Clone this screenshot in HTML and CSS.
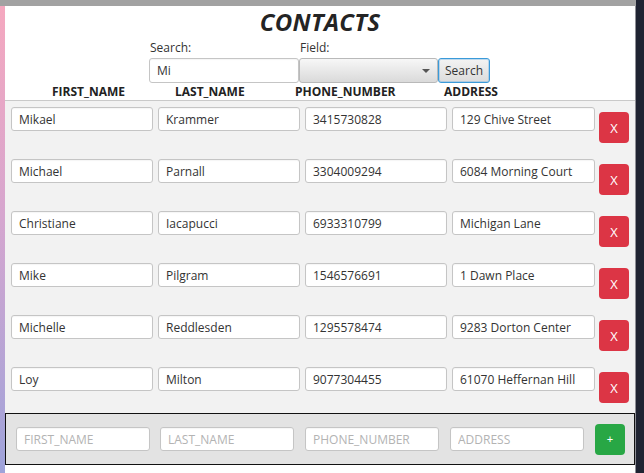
FILE: index.html
```html
<!DOCTYPE html>
<html>
<head>
<meta charset="utf-8">
<link rel="stylesheet" href="styles.css">
</head>
<body>
<div class="screen">
  <div class="frame">
    <div class="topbar"></div>
    <div class="body">
      <div class="accent"></div>
      <div class="main">
        <header class="header">
          <h1 class="title">CONTACTS</h1>
          <div class="search-row">
            <div class="group">
              <label class="label">Search:</label>
              <input class="field search-input" type="text" value="Mi">
            </div>
            <div class="group">
              <label class="label">Field:</label>
              <div class="combo"><span class="arrow"></span></div>
            </div>
            <div class="group">
              <span class="label">&nbsp;</span>
              <button class="search-btn">Search</button>
            </div>
          </div>
          <div class="col-heads">
            <span>FIRST_NAME</span>
            <span>LAST_NAME</span>
            <span>PHONE_NUMBER</span>
            <span>ADDRESS</span>
          </div>
        </header>
        <div class="list">
          <div class="row">
            <input class="field c1" value="Mikael"><input class="field c2" value="Krammer"><input class="field c3" value="3415730828"><input class="field c4" value="129 Chive Street">
            <button class="del">X</button>
          </div>
          <div class="row">
            <input class="field c1" value="Michael"><input class="field c2" value="Parnall"><input class="field c3" value="3304009294"><input class="field c4" value="6084 Morning Court">
            <button class="del">X</button>
          </div>
          <div class="row">
            <input class="field c1" value="Christiane"><input class="field c2" value="Iacapucci"><input class="field c3" value="6933310799"><input class="field c4" value="Michigan Lane">
            <button class="del">X</button>
          </div>
          <div class="row">
            <input class="field c1" value="Mike"><input class="field c2" value="Pilgram"><input class="field c3" value="1546576691"><input class="field c4" value="1 Dawn Place">
            <button class="del">X</button>
          </div>
          <div class="row">
            <input class="field c1" value="Michelle"><input class="field c2" value="Reddlesden"><input class="field c3" value="1295578474"><input class="field c4" value="9283 Dorton Center">
            <button class="del">X</button>
          </div>
          <div class="row">
            <input class="field c1" value="Loy"><input class="field c2" value="Milton"><input class="field c3" value="9077304455"><input class="field c4" value="61070 Heffernan Hill">
            <button class="del">X</button>
          </div>
        </div>
        <div class="add-panel">
          <input class="field add a1" placeholder="FIRST_NAME">
          <input class="field add" placeholder="LAST_NAME">
          <input class="field add" placeholder="PHONE_NUMBER">
          <input class="field add" placeholder="ADDRESS">
          <button class="plus">+</button>
        </div>
      </div>
      <div class="edge"></div>
    </div>
  </div>
  <div class="dark"></div>
</div>
</body>
</html>
```

FILE: styles.css
```css
* { box-sizing: border-box; }
html, body { margin: 0; padding: 0; }
body {
  width: 644px;
  height: 473px;
  overflow: hidden;
  font-family: "Open Sans", "Noto Sans", sans-serif;
  font-size: 12px;
  color: #333;
  background: #fff;
}
.screen { display: flex; height: 473px; }
.frame { width: 636px; display: flex; flex-direction: column; }
.dark { flex: 1; background: #1f2332; }
.topbar { height: 6px; background: #a2a2a2; flex: none; }
.body { display: flex; flex: 1; }
.accent {
  width: 5px;
  background: linear-gradient(to bottom, #f5a8bf 0%, #d6a6cf 45%, #9ea3da 100%);
}
.edge { width: 1px; background: #8f8f96; }
.main { width: 630px; display: flex; flex-direction: column; background: #fff; }

.header { height: 95px; border-bottom: 1px solid #c9c9c9; background: #fff; }
.title {
  margin: 0;
  height: 32px;
  line-height: 32px;
  text-align: center;
  font-size: 24px;
  font-weight: 700;
  font-style: italic;
  color: #242424;
  letter-spacing: 0.3px;
}
.search-row { display: flex; padding-left: 144px; align-items: flex-end; }
.group { display: flex; flex-direction: column; }
.label {
  height: 20px;
  line-height: 16px;
  padding-top: 2px;
  padding-left: 1px;
  font-size: 12px;
  color: #333;
}
.field {
  height: 24px;
  border: 1px solid #c5c5c5;
  border-radius: 3px;
  background: #fff;
  font-family: "Open Sans", "Noto Sans", sans-serif;
  font-size: 12px;
  color: #333;
  padding: 0 7px;
  margin: 0;
  outline: none;
  box-shadow: inset 0 1px 1px rgba(0,0,0,0.04);
}
.search-input { width: 150px; height: 25px; }
.combo {
  width: 139px;
  height: 25px;
  border: 1px solid #b9b9b9;
  border-radius: 3px;
  background: linear-gradient(to bottom, #f7f7f7, #dadada);
  position: relative;
}
.arrow {
  position: absolute;
  right: 7px;
  top: 10px;
  width: 0; height: 0;
  border-left: 4px solid transparent;
  border-right: 4px solid transparent;
  border-top: 4px solid #555;
}
.search-btn {
  width: 52px;
  height: 25px;
  margin: 0;
  padding: 0;
  border: 1px solid #3a9ad9;
  border-radius: 3px;
  background: linear-gradient(to bottom, #f3f3f3, #dcdcdc);
  box-shadow: 0 0 0 1px rgba(90,170,230,0.35) inset;
  font-family: "Open Sans", "Noto Sans", sans-serif;
  font-size: 12px;
  color: #333;
}
.col-heads {
  display: grid;
  grid-template-columns: 123px 120px 149px auto;
  padding-left: 47px;
  height: 17px;
  line-height: 17px;
  font-weight: 700;
  font-size: 12px;
  color: #222;
}

.list { background: #f2f2f2; height: 312px; padding-left: 6px; }
.row { display: flex; align-items: flex-start; height: 52px; padding-top: 6px; }
.row .field { width: 142px; margin-right: 5px; }
.row .c4 { width: 143px; margin-right: 4px; }
.del {
  margin-top: 5px;
  width: 30px;
  height: 31px;
  border: none;
  border-radius: 4px;
  background: #dc3545;
  color: #fff;
  font-family: "Open Sans", "Noto Sans", sans-serif;
  font-size: 13px;
  padding: 0;
}

.add-panel {
  height: 52px;
  border: 1px solid #111;
  background: #e3e3e3;
  display: flex;
  align-items: center;
  padding-left: 10px;
}
.add { width: 134px; margin-right: 11px; }
.add.a1 { margin-right: 10px; }
.add::placeholder { color: #b3b3b3; }
.plus {
  width: 30px;
  height: 31px;
  border: none;
  border-radius: 4px;
  background: #28a745;
  color: #fff;
  font-size: 11px;
  padding: 0;
  margin-left: 0;
}
```
